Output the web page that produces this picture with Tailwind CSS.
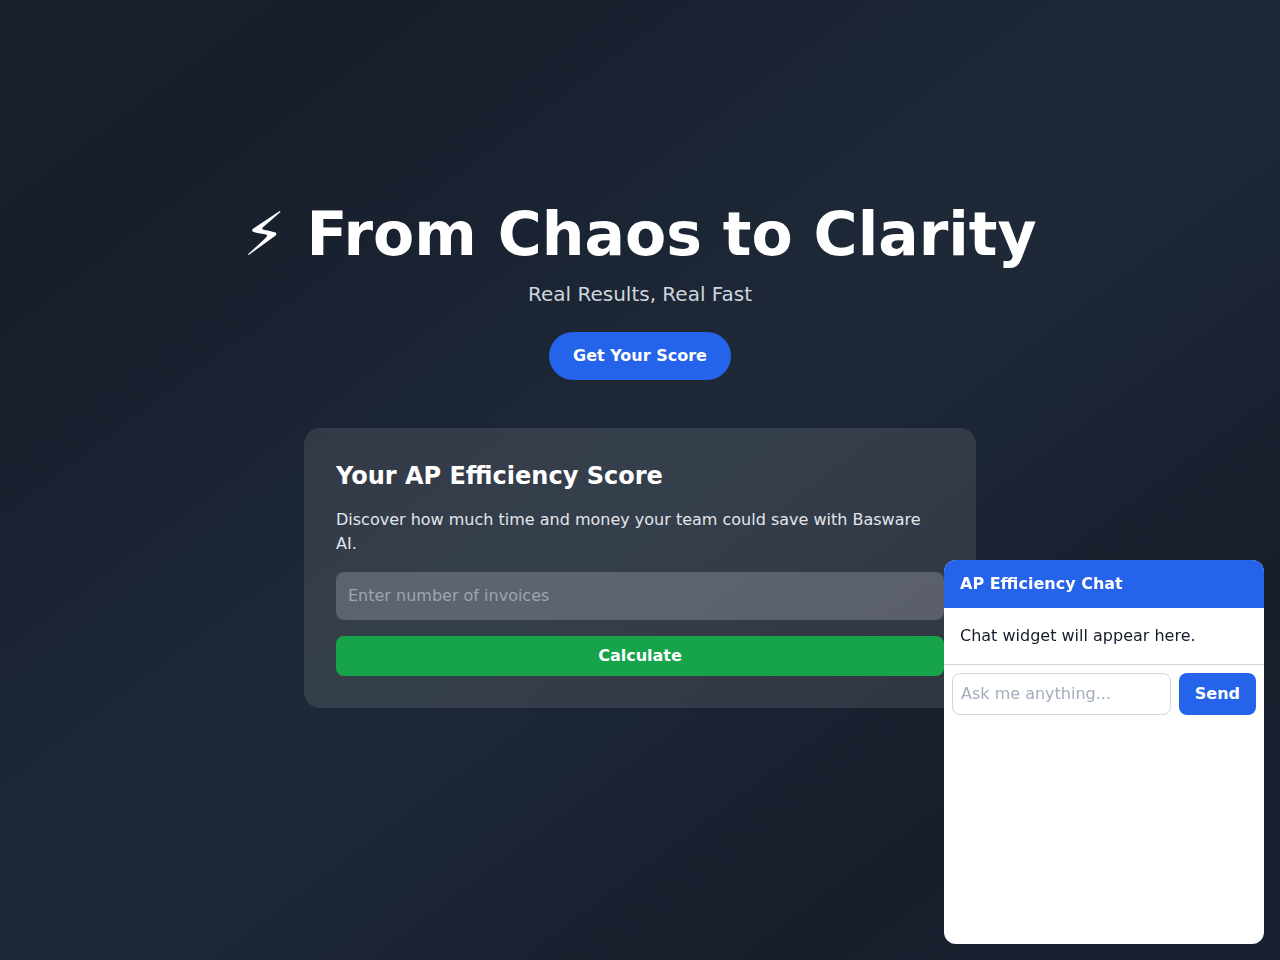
<!DOCTYPE html>
<html lang="en">
<head>
<meta charset="utf-8">
<title>From Chaos to Clarity</title>
<script src="https://cdn.jsdelivr.net/npm/@tailwindcss/browser@4"></script>
</head>
<body class="font-['DejaVu_Sans',sans-serif]">
<main class="min-h-screen flex flex-col items-center justify-center pb-12 text-white bg-[linear-gradient(to_bottom_right,#18202e_0%,#171e2c_16%,#1e2837_47%,#1e2837_53%,#171e2c_80%,#192130_100%)]">
  <h1 class="text-6xl font-bold mb-4">⚡ From Chaos to Clarity</h1>
  <p class="text-xl text-[#ced5de] mb-6">Real Results, Real Fast</p>
  <a href="#" class="block bg-[#2563eb] rounded-full px-6 py-3 font-semibold text-white">Get Your Score</a>
  <section class="mt-12 w-[672px] p-8 rounded-2xl bg-white/10">
    <h2 class="text-2xl font-bold mb-4">Your AP Efficiency Score</h2>
    <p class="text-[#e2e6ec] mb-4">Discover how much time and money your team could save with Basware AI.</p>
    <input type="text" placeholder="Enter number of invoices" class="block w-full p-3 rounded-lg bg-white/20 text-white placeholder:text-[#9ca5b3] mb-4 outline-none">
    <button class="block w-full py-2 rounded-lg bg-[#16a34a] font-semibold text-white">Calculate</button>
  </section>
</main>
<aside class="fixed bottom-4 right-4 w-80 h-96 bg-white rounded-xl overflow-hidden flex flex-col">
  <div class="bg-[#2563eb] text-white font-semibold px-4 py-3">AP Efficiency Chat</div>
  <div class="p-4 text-[#151c2b]">Chat widget will appear here.</div>
  <div class="flex gap-2 p-2 border-t border-[#d1d5db]">
    <input type="text" placeholder="Ask me anything..." class="flex-1 min-w-0 border border-[#d1d5db] rounded-lg px-2 py-2 text-[#151c2b] placeholder:text-[#a3adbd] outline-none">
    <button class="bg-[#2563eb] text-white font-semibold px-4 rounded-lg">Send</button>
  </div>
</aside>
</body>
</html>
